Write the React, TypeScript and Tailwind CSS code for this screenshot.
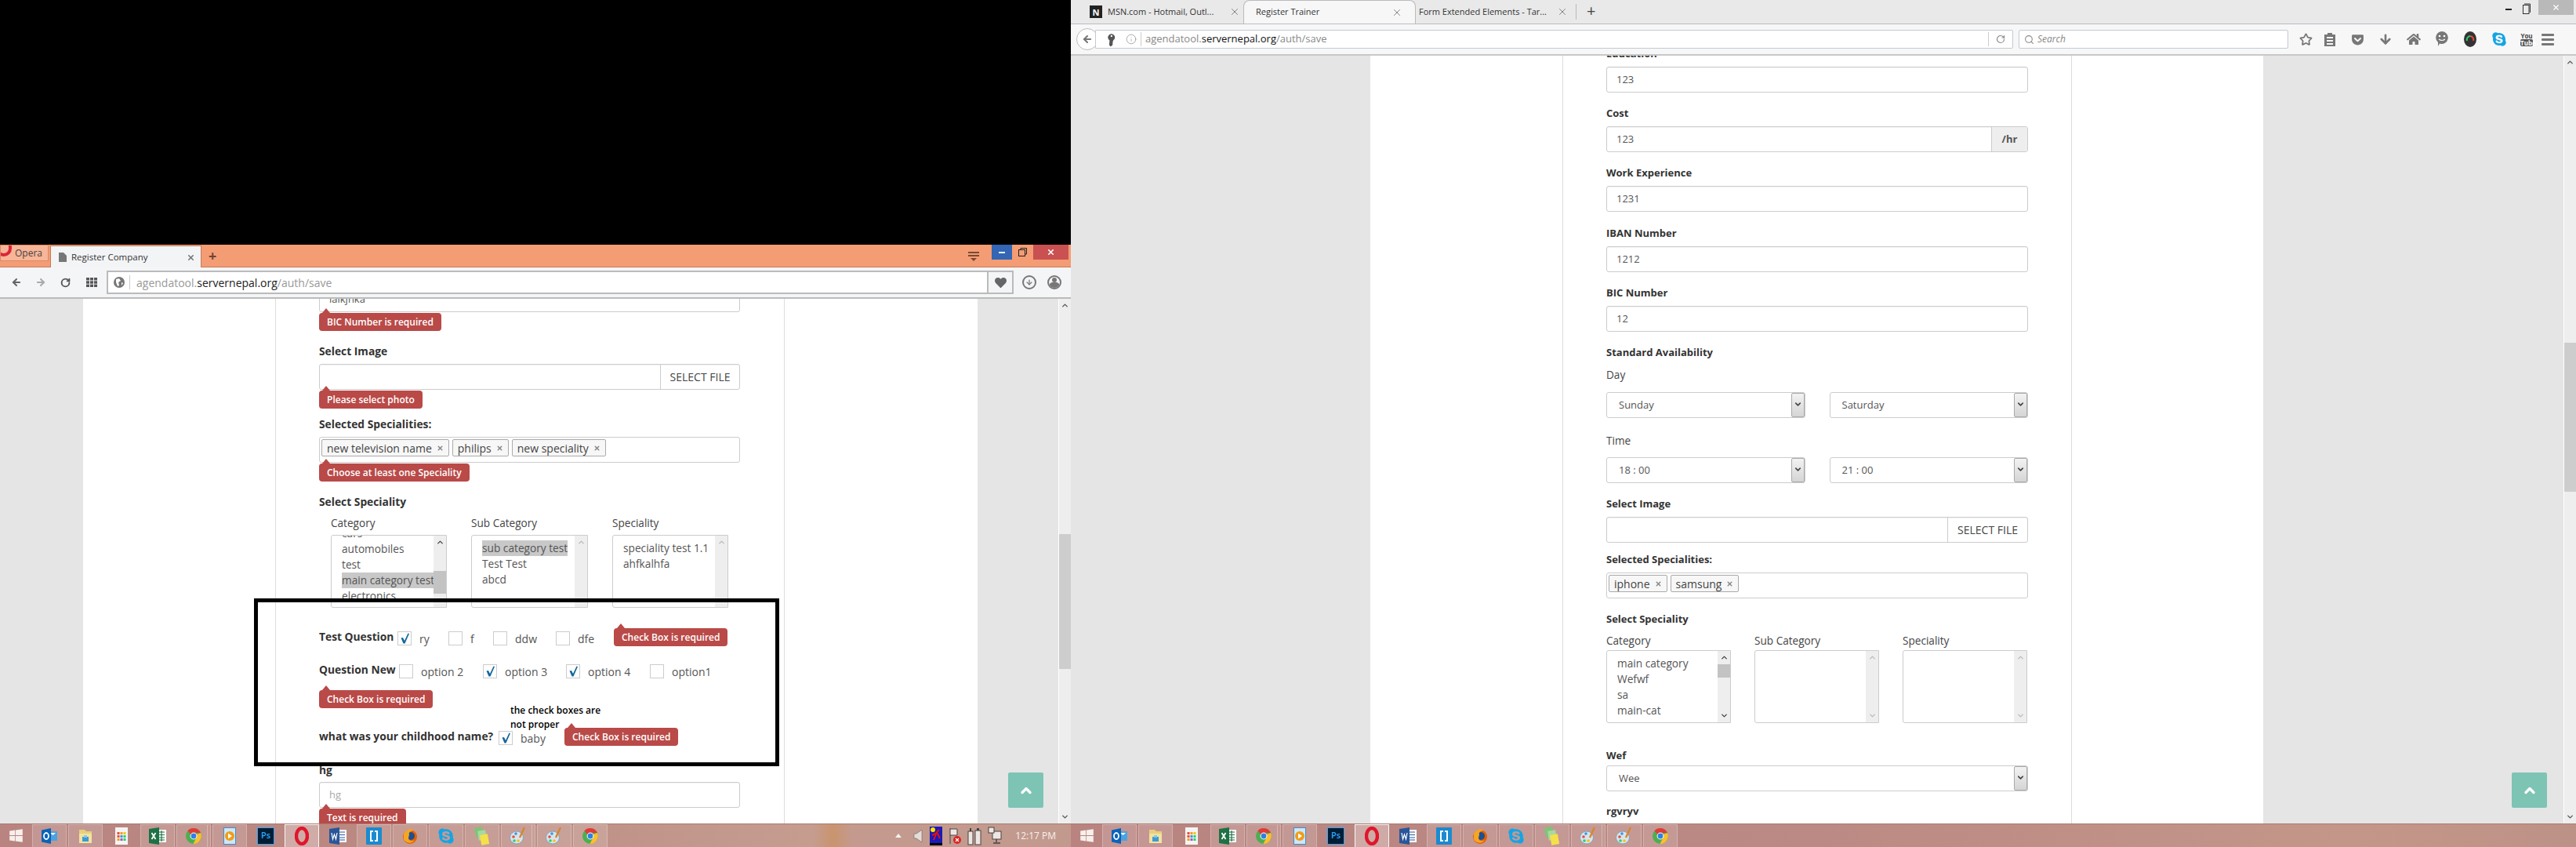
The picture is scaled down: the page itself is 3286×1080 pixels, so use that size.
import type { ReactNode } from 'react';
import { ArrowDown, ArrowLeft, ArrowRight, ChevronDown, ChevronUp, Info, RotateCw, Search, Star, X } from 'lucide-react';
import { FaGetPocket, FaHome, FaSkype, FaKey, FaHeart, FaWindows } from 'react-icons/fa';

/* ---------- small form pieces ---------- */

function Label({ children, className = '', size = 'text-[13px]' }: { children: ReactNode; className?: string; size?: string }) {
  return <div className={`h-[20px] flex items-center font-bold text-[#333] whitespace-nowrap ${size} ${className}`}>{children}</div>;
}

function SubLabel({ children, className = '' }: { children: ReactNode; className?: string }) {
  return <div className={`h-[20px] flex items-center text-[13.6px] text-[#444] whitespace-nowrap ${className}`}>{children}</div>;
}

function TextBox({ value, className = '', muted = false, addon }: { value?: string; className?: string; muted?: boolean; addon?: ReactNode }) {
  return (
    <div className={`h-[33px] flex items-stretch border border-[#ccc] rounded-[3px] bg-white text-[13px] overflow-hidden shadow-[inset_0_1px_1px_rgba(0,0,0,0.05)] ${className}`}>
      <div className={`flex-1 flex items-center pl-[12px] ${muted ? 'text-[#aaa]' : 'text-[#555]'}`}>{value}</div>
      {addon}
    </div>
  );
}

function FileBox({ className = '', btn }: { className?: string; btn: string }) {
  return (
    <TextBox
      className={className}
      addon={<div className={`${btn} flex items-center justify-center border-l border-[#ccc] text-[14px] text-[#444]`}>SELECT FILE</div>}
    />
  );
}

function Badge({ text, className = '' }: { text: string; className?: string }) {
  return (
    <div className={`relative h-[23px] w-fit px-[10px] flex items-center rounded-[4px] bg-[#b94a48] text-[12px] font-semibold text-white whitespace-nowrap ${className}`}>
      <span className="absolute top-[-6px] left-[4px] w-0 h-0 border-x-[5px] border-x-transparent border-b-[6px] border-b-[#b94a48]" />
      {text}
    </div>
  );
}

function Tag({ text }: { text: string }) {
  return (
    <div className="h-[22px] flex items-center gap-[6px] px-[6px] border border-[#aaa] rounded-[2px] bg-[#f7f7f7] text-[14px] text-[#444] whitespace-nowrap">
      {text}
      <X size={9} strokeWidth={4} className="text-[#888]" />
    </div>
  );
}

function TagBox({ tags, className = '' }: { tags: string[]; className?: string }) {
  return (
    <div className={`h-[33px] flex items-start gap-[4px] pt-[2px] pl-[2px] border border-[#ccc] rounded-[3px] bg-white ${className}`}>
      {tags.map((t) => (
        <Tag key={t} text={t} />
      ))}
    </div>
  );
}

function DropBox({ value, className = '' }: { value: string; className?: string }) {
  return (
    <div className={`h-[33px] flex items-stretch border border-[#ccc] rounded-[3px] bg-white text-[13px] text-[#555] ${className}`}>
      <div className="flex-1 flex items-center pl-[15px]">{value}</div>
      <div className="w-[17px] flex items-center justify-center pb-[2px] border border-[#aaa] rounded-[2px] bg-gradient-to-b from-[#f2f2f2] to-[#d5d5d5]">
        <ChevronDown size={11} strokeWidth={3.5} className="text-[#444]" />
      </div>
    </div>
  );
}

function ListBox({
  items,
  selected,
  selClass = '',
  pull = 'pt-[6px]',
  thumb,
  className = '',
}: {
  items: string[];
  selected?: number;
  selClass?: string;
  pull?: string;
  thumb?: string;
  className?: string;
}) {
  const arrow = thumb ? 'text-[#444]' : 'text-[#bbb]';
  return (
    <div className={`h-[93px] flex border border-[#ccc] rounded-l-[3px] bg-white overflow-hidden ${className}`}>
      <div className={`flex-1 min-w-0 text-[13.7px] text-[#555] ${pull}`}>
        {items.map((t, i) => (
          <div key={t} className="h-[20px] flex items-center pl-[13px] whitespace-nowrap overflow-hidden">
            <span className={i === selected ? `bg-[#c8c8c8] ${selClass}` : ''}>{t}</span>
          </div>
        ))}
      </div>
      <div className="w-[16px] shrink-0 flex flex-col bg-[#eeeeee]">
        <div className="h-[17px] flex items-center justify-center">
          <ChevronUp size={11} strokeWidth={3} className={arrow} />
        </div>
        {thumb ? <div className={`bg-[#c3c3c3] ${thumb}`} /> : null}
        <div className="flex-1" />
        <div className="h-[17px] flex items-center justify-center">
          <ChevronDown size={11} strokeWidth={3} className={arrow} />
        </div>
      </div>
    </div>
  );
}

function Check({ on = false }: { on?: boolean }) {
  return (
    <div className="w-[18px] h-[18px] shrink-0 border border-[#ccc] bg-white flex items-center justify-center">
      {on ? (
        <svg width="13" height="14" viewBox="0 0 13 14">
          <path d="M1.5 6.5 L4 6 L6 10 L10.5 0.5 L12 1 L6.5 13.5 L4.5 13.5 Z" fill="#13689b" />
        </svg>
      ) : null}
    </div>
  );
}

function Opt({ text, on, className }: { text: string; on?: boolean; className: string }) {
  return (
    <div className={`flex items-center shrink-0 text-[14px] text-[#555] ${className}`}>
      <Check on={on} />
      <span className="ml-[10px] whitespace-nowrap">{text}</span>
    </div>
  );
}

function UpButton() {
  return (
    <div className="w-[45px] h-[45px] flex items-center justify-center rounded-[2px] bg-[#7dc4b5]">
      <ChevronUp size={20} strokeWidth={4} className="text-white" />
    </div>
  );
}

function PageBar({ thumb }: { thumb: string }) {
  return (
    <div className="w-[16px] shrink-0 flex flex-col border-l border-white bg-[#eeeeee]">
      <div className="h-[17px] flex items-center justify-center">
        <ChevronUp size={11} strokeWidth={3} className="text-[#555]" />
      </div>
      <div className={`bg-[#cdcdcd] ${thumb}`} />
      <div className="flex-1" />
      <div className="h-[17px] flex items-center justify-center">
        <ChevronDown size={11} strokeWidth={3} className="text-[#555]" />
      </div>
    </div>
  );
}

/* ---------- taskbar icons ---------- */

const Outlook = () => (
  <svg width="20" height="20" viewBox="0 0 20 20">
    <rect x="9" y="4" width="11" height="12" fill="#4aa3e0" />
    <path d="M11 6 h7 l-3.5 3 Z" fill="#fff" />
    <path d="M0 2.5 L12 0 V20 L0 17.5 Z" fill="#0a63b8" />
    <ellipse cx="6" cy="10" rx="3" ry="4" fill="none" stroke="#fff" strokeWidth="1.8" />
  </svg>
);
const Folder = () => (
  <svg width="20" height="22" viewBox="0 0 20 22">
    <path d="M2 3 h7 l2 2 h7 v15 H2 Z" fill="#e8d07a" />
    <rect x="2" y="8" width="16" height="12" fill="#f2e3a0" />
    <rect x="6" y="12" width="8" height="6" fill="#3d9bd4" />
    <rect x="8" y="10" width="4" height="3" fill="#8cc5e6" />
  </svg>
);
const Tiles = () => (
  <svg width="16" height="22" viewBox="0 0 16 22">
    <rect width="16" height="22" fill="#f4f4f4" />
    {['#e74c3c', '#f39c12', '#f1c40f', '#e74c3c', '#3498db', '#2ecc71', '#f39c12', '#9b59b6', '#2ecc71'].map((c, i) => (
      <rect key={i} x={2.5 + (i % 3) * 4} y={6 + Math.floor(i / 3) * 4} width="3" height="3" fill={c} />
    ))}
  </svg>
);
const Excel = () => (
  <svg width="22" height="22" viewBox="0 0 22 22">
    <rect x="10" y="3" width="12" height="16" fill="#fff" />
    <path d="M12 6 h8 M12 9.5 h8 M12 13 h8 M12 16 h8 M16 4 v14" stroke="#1e7145" strokeWidth="1.2" />
    <path d="M0 2 L13 0 V22 L0 20 Z" fill="#1e7145" />
    <path d="M3.5 7 l5 8 M8.5 7 l-5 8" stroke="#fff" strokeWidth="1.8" />
  </svg>
);
const Chrome = () => (
  <svg width="20" height="20" viewBox="0 0 20 20">
    <circle cx="10" cy="10" r="10" fill="#4caf50" />
    <path d="M10 0 A10 10 0 0 1 19 6 H10 A4 4 0 0 0 6.5 8 L2.5 3.3 A10 10 0 0 1 10 0 Z" fill="#e53935" />
    <path d="M19 6 A10 10 0 0 1 9.5 20 L13.5 12 A4 4 0 0 0 13.5 8 Z" fill="#fbc02d" />
    <circle cx="10" cy="10" r="4.4" fill="#fff" />
    <circle cx="10" cy="10" r="3.4" fill="#2f7fe6" />
  </svg>
);
const Media = () => (
  <svg width="16" height="22" viewBox="0 0 16 22">
    <rect x="0.5" y="0.5" width="15" height="21" fill="#cfe6f6" stroke="#3b8fd0" />
    <circle cx="8" cy="11" r="6" fill="#f39c12" />
    <path d="M6 7.5 L11 11 L6 14.5 Z" fill="#fff" />
  </svg>
);
const Ps = () => (
  <div className="w-[22px] h-[22px] flex items-center justify-center border border-[#31a8ff] bg-[#001d34] text-[11px] font-semibold text-[#31a8ff]">Ps</div>
);
const Opera = () => (
  <svg width="18" height="24" viewBox="0 0 18 24">
    <ellipse cx="9" cy="12" rx="7" ry="10" fill="none" stroke="#e0162b" strokeWidth="4.4" />
  </svg>
);
const Word = () => (
  <svg width="22" height="22" viewBox="0 0 22 22">
    <rect x="10" y="3" width="12" height="16" fill="#fff" />
    <path d="M13 6 h7 M13 9.5 h7 M13 13 h7 M13 16 h7" stroke="#2a5699" strokeWidth="1.2" />
    <path d="M0 2 L13 0 V22 L0 20 Z" fill="#2a5699" />
    <path d="M3 7 l1.5 8 l2 -6 l2 6 l1.5 -8" fill="none" stroke="#fff" strokeWidth="1.2" />
  </svg>
);
const Brackets = () => (
  <svg width="20" height="22" viewBox="0 0 20 22">
    <rect width="20" height="22" rx="1" fill="#1a8bd0" />
    <path d="M9 5 H6 V17 H9 M11 5 H14 V17 H11" fill="none" stroke="#fff" strokeWidth="2" />
  </svg>
);
const Firefox = () => (
  <svg width="20" height="22" viewBox="0 0 20 22">
    <circle cx="10" cy="12" r="9" fill="#e66000" />
    <circle cx="11" cy="11" r="5" fill="#1d4f91" />
    <path d="M2 8 C5 2 12 1 15 4 C11 4 8 6 9 10 C6 16 11 19 16 16 C13 21 5 21 2 15 Z" fill="#f5a623" />
  </svg>
);
const Skype = () => <FaSkype size={22} className="text-[#12a5e6]" />;
const Files = () => (
  <svg width="20" height="24" viewBox="0 0 20 24">
    <rect x="1" y="1" width="10" height="12" fill="#7cc576" transform="rotate(-14 6 7)" />
    <rect x="5" y="5" width="10" height="12" fill="#a8d8a0" transform="rotate(-8 10 11)" />
    <rect x="8" y="10" width="10" height="13" fill="#f5e04a" transform="rotate(-10 13 16)" />
  </svg>
);
const Paint = () => (
  <svg width="22" height="22" viewBox="0 0 22 22">
    <ellipse cx="9" cy="13" rx="8.5" ry="8" fill="#d8e4ee" stroke="#8aa0b4" />
    <circle cx="5" cy="12" r="1.8" fill="#e74c3c" />
    <circle cx="8" cy="8" r="1.8" fill="#3498db" />
    <circle cx="6" cy="17" r="1.8" fill="#2ecc71" />
    <circle cx="11" cy="17" r="1.8" fill="#f1c40f" />
    <path d="M19 0 L13 13" stroke="#d8862c" strokeWidth="2.4" />
  </svg>
);

function Slot({ children, plain = false, active = false, stack = false }: { children: ReactNode; plain?: boolean; active?: boolean; stack?: boolean }) {
  const look = active
    ? 'bg-white/30 border-white/90'
    : plain
      ? 'border-transparent'
      : 'bg-white/15 border-white/25';
  return (
    <div className={`relative w-[44px] h-[30px] shrink-0 flex items-center justify-center border ${look}`}>
      {children}
      {stack ? <span className="absolute right-[3px] top-0 bottom-0 w-[1px] bg-white/30" /> : null}
    </div>
  );
}

function TaskApps() {
  return (
    <div className="flex items-center gap-[2px]">
      <Slot><Outlook /></Slot>
      <Slot><Folder /></Slot>
      <Slot plain><Tiles /></Slot>
      <Slot><Excel /></Slot>
      <Slot stack><Chrome /></Slot>
      <Slot><Media /></Slot>
      <Slot plain><Ps /></Slot>
      <Slot active><Opera /></Slot>
      <Slot plain><Word /></Slot>
      <Slot><Brackets /></Slot>
      <Slot><Firefox /></Slot>
      <Slot><Skype /></Slot>
      <Slot><Files /></Slot>
      <Slot stack><Paint /></Slot>
      <Slot><Paint /></Slot>
      <Slot><Chrome /></Slot>
    </div>
  );
}

function WinButton({ className }: { className: string }) {
  return (
    <div className={`shrink-0 flex items-center justify-center ${className}`}>
      <FaWindows size={19} className="text-[#f7efec]" />
    </div>
  );
}

function Tray() {
  return (
    <div className="flex items-center pr-[19px] text-white">
      <span className="w-0 h-0 border-x-[4px] border-x-transparent border-b-[5px] border-b-[#f4f4f4] mr-[15px]" />
      <svg width="12" height="20" viewBox="0 0 12 20" className="mr-[9px]">
        <path d="M1 7 H4 L11 2 V18 L4 13 H1 Z" fill="#e7dcd8" stroke="#666" strokeWidth="0.6" />
      </svg>
      <div className="w-[16px] h-[24px] mr-[8px] bg-[#1a1ab8] border-b-[3px] border-black flex items-center justify-center">
        <svg width="14" height="18" viewBox="0 0 14 18">
          <circle cx="3" cy="3" r="3" fill="#ffe600" />
          <path d="M4 16 L8 6 L11 3 M8 6 L12 14 M2 10 L8 7" stroke="#e01010" strokeWidth="2" fill="none" />
        </svg>
      </div>
      <svg width="16" height="24" viewBox="0 0 16 24" className="mr-[8px]">
        <path d="M2 2 V22 M2 3 H11 V11 H2" fill="#efe6e3" stroke="#444" strokeWidth="1" />
        <circle cx="11" cy="17" r="5" fill="#d22" />
        <path d="M9 15 l4 4 M13 15 l-4 4" stroke="#fff" strokeWidth="1.2" />
      </svg>
      <svg width="18" height="24" viewBox="0 0 18 24" className="mr-[8px]">
        <rect x="1" y="6" width="6" height="17" fill="#efe6e3" stroke="#444" />
        <rect x="10" y="5" width="7" height="18" fill="#efe6e3" stroke="#444" />
        <rect x="3" y="2" width="2" height="4" fill="#444" />
        <rect x="12" y="2" width="3" height="3" fill="#444" />
      </svg>
      <svg width="18" height="24" viewBox="0 0 18 24" className="mr-[17px]">
        <rect x="6" y="6" width="11" height="10" fill="#efe6e3" stroke="#444" />
        <rect x="1" y="1" width="7" height="7" fill="#efe6e3" stroke="#444" />
        <path d="M11 16 V20 M7 21 H16" stroke="#444" strokeWidth="1.4" />
      </svg>
      <span className="text-[12px] text-[#f6f0ee] whitespace-nowrap">12:17 PM</span>
    </div>
  );
}

/* ---------- left window (Opera) ---------- */

function OperaChrome() {
  return (
    <>
      <div className="h-[29px] flex items-start bg-[#f49c74] border-b border-[#c97b58]">
        <div className="relative w-[62px] h-[21px] shrink-0 flex items-center justify-end pr-[7px] bg-[#f8b597] border border-[#d98a66] text-[12px] text-[#444] overflow-hidden">
          <span className="absolute left-[-6px] top-[-8px] w-[20px] h-[22px] rounded-full border-[4px] border-[#d9263b]" />
          Opera
        </div>
        <div className="ml-[2px] w-[193px] h-[29px] mt-[1px] shrink-0 flex items-center pl-[10px] pr-[7px] bg-[#f3f4f6] border-x border-t border-[#c97b58] text-[11.5px] text-[#333]">
          <svg width="10" height="12" viewBox="0 0 10 12" className="mr-[6px] shrink-0">
            <path d="M0 0 H6 L10 4 V12 H0 Z" fill="#777" />
          </svg>
          <span className="flex-1 whitespace-nowrap">Register Company</span>
          <X size={11} strokeWidth={3.5} className="text-[#777]" />
        </div>
        <span className="ml-[9px] mt-[4px] text-[18px] leading-[20px] font-bold text-[#6d4632]">+</span>
        <div className="flex-1" />
        <svg width="14" height="13" viewBox="0 0 14 13" className="mt-[9px] mr-[16px]">
          <path d="M0 1 H14 M0 5 H14" stroke="#7a4a33" strokeWidth="1.8" />
          <path d="M3 8 H11 L7 12 Z" fill="#7a4a33" />
        </svg>
        <div className="w-[26px] h-[19px] flex items-center justify-center bg-[#3366b5]">
          <span className="w-[8px] h-[2px] bg-white" />
        </div>
        <div className="w-[27px] h-[19px] flex items-center justify-center">
          <svg width="11" height="11" viewBox="0 0 11 11" fill="none" stroke="#222">
            <rect x="0.5" y="2.5" width="8" height="8" />
            <path d="M3 2 V0.5 H10.5 V8 H9" />
          </svg>
        </div>
        <div className="w-[45px] h-[19px] flex items-center justify-center bg-[#c95151]">
          <X size={11} strokeWidth={3.5} className="text-white" />
        </div>
        <div className="w-[3px]" />
      </div>
      <div className="h-[40px] flex items-center bg-[#f4f5f7] border-b-2 border-[#bbb]">
        <ArrowLeft size={14} strokeWidth={3.5} className="ml-[14px] text-[#666]" />
        <ArrowRight size={14} strokeWidth={3.5} className="ml-[17px] text-[#aaa]" />
        <RotateCw size={13} strokeWidth={3.5} className="ml-[18px] text-[#555]" />
        <svg width="14" height="12" viewBox="0 0 14 12" className="ml-[20px] text-[#555]">
          {[0, 1, 2].map((r) =>
            [0, 1, 2].map((c) => <rect key={`${r}${c}`} x={c * 5} y={r * 4.3} width="4" height="3.4" fill="currentColor" />),
          )}
        </svg>
        <div className="ml-[12px] w-[1157px] h-[30px] flex items-stretch bg-white border-2 border-[#bbb] border-r-0">
          <div className="w-[27px] flex items-center justify-center">
            <svg width="14" height="14" viewBox="0 0 14 14">
              <circle cx="7" cy="7" r="7" fill="#777" />
              <path d="M3 3 L7 2 L9 5 L6 7 L7 11 L5 12 L3 7 Z M10 7 L12 8 L10 11 Z" fill="#fff" />
            </svg>
          </div>
          <div className="flex-1 flex items-center text-[14px] text-[#999]">
            <span className="h-[18px] border-l border-[#ccc] mr-[8px]" />
            <span className="whitespace-nowrap">agendatool.<span className="text-[#222]">servernepal.org</span>/auth/save</span>
          </div>
          <div className="w-[34px] flex items-center justify-center bg-[#f4f5f7] border-x-2 border-[#bbb]">
            <FaHeart size={15} className="text-[#666]" />
          </div>
        </div>
        <div className="ml-[11px] w-[18px] h-[18px] rounded-full border-2 border-[#777] flex items-center justify-center">
          <ArrowDown size={10} strokeWidth={3} className="text-[#777]" />
        </div>
        <div className="ml-[14px] w-[18px] h-[18px] rounded-full border-2 border-[#777] overflow-hidden flex flex-col items-center">
          <span className="mt-[1px] w-[6px] h-[6px] rounded-full bg-[#777]" />
          <span className="w-[14px] h-[8px] rounded-t-[5px] bg-[#777]" />
        </div>
      </div>
    </>
  );
}

function OperaForm() {
  const big = 'text-[13.8px]';
  return (
    <div className="ml-[245px] w-[650px] shrink-0 h-full overflow-hidden bg-white border-x border-[#ddd] pl-[55px] pr-[56px]">
      <TextBox value="lalkjhka" className="mt-[-16px]" />
      <Badge text="BIC Number is required" className="mt-[1px]" />
      <Label size={big} className="mt-[16px]">Select Image</Label>
      <FileBox className="mt-[6px]" btn="w-[101px]" />
      <Badge text="Please select photo" className="mt-[1px]" />
      <Label size={big} className="mt-[10px]">Selected Specialities:</Label>
      <TagBox className="mt-[6px]" tags={['new television name', 'philips', 'new speciality']} />
      <Badge text="Choose at least one Speciality" className="mt-[1px]" />
      <Label size={big} className="mt-[16px]">Select Speciality</Label>
      <div className="mt-[7px] ml-[15px] flex">
        <SubLabel className="w-[179px]">Category</SubLabel>
        <SubLabel className="w-[180px]">Sub Category</SubLabel>
        <SubLabel>Speciality</SubLabel>
      </div>
      <div className="mt-[5px] ml-[15px] flex gap-[31px]">
        <ListBox
          className="w-[148px]"
          pull="mt-[-13px]"
          items={['cars', 'automobiles', 'test', 'main category test', 'electronics', 'phones']}
          selected={3}
          thumb="mt-[28px] h-[30px]"
        />
        <ListBox className="w-[149px]" items={['sub category test', 'Test Test', 'abcd']} selected={0} />
        <ListBox className="w-[148px]" items={['speciality test 1.1', 'ahfkalhfa']} />
      </div>
      <div className="mt-[24px] h-[30px] flex items-center">
        <Label size={big} className="w-[100px] shrink-0 mb-[4px]">Test Question</Label>
        <Opt text="ry" on className="w-[65px]" />
        <Opt text="f" className="w-[57px]" />
        <Opt text="ddw" className="w-[80px]" />
        <Opt text="dfe" className="w-[74px]" />
        <Badge text="Check Box is required" className="mb-[3px]" />
      </div>
      <div className="mt-[12px] h-[30px] flex items-center">
        <Label size={big} className="w-[102px] shrink-0 mb-[4px]">Question New</Label>
        <Opt text="option 2" className="w-[107px]" />
        <Opt text="option 3" on className="w-[106px]" />
        <Opt text="option 4" on className="w-[107px]" />
        <Opt text="option1" className="w-[80px]" />
      </div>
      <Badge text="Check Box is required" className="mt-[9px]" />
      <div className="mt-[23px] h-[30px] flex items-center">
        <Label size={big} className="w-[229px] shrink-0 mb-[4px]">what was your childhood name?</Label>
        <Opt text="baby" on className="w-[84px]" />
        <Badge text="Check Box is required" className="mb-[3px]" />
      </div>
      <Label size={big} className="mt-[16px]">hg</Label>
      <TextBox value="hg" muted className="mt-[5px]" />
      <Badge text="Text is required" className="mt-[1px]" />
    </div>
  );
}

function OperaWindow() {
  return (
    <div className="w-[1366px] h-[1080px] shrink-0 flex flex-col">
      <div className="h-[312px] bg-black" />
      <OperaChrome />
      <div className="relative h-[669px] flex bg-[#e5e5e5] overflow-hidden">
        <div className="ml-[106px] w-[1141px] shrink-0 h-full bg-white">
          <OperaForm />
        </div>
        <div className="flex-1 flex items-end justify-end pr-[19px] pb-[20px]">
          <UpButton />
        </div>
        <PageBar thumb="mt-[283px] h-[172px]" />
        {/* the annotation someone drew over the screenshot */}
        <div className="absolute left-[324px] top-[382px] w-[670px] h-[214px] border-[5px] border-black">
          <div className="absolute left-[322px] top-[129px] text-[12px] leading-[18px] font-semibold text-black whitespace-nowrap">
            the check boxes are
            <br />
            not proper
          </div>
        </div>
      </div>
      <div className="h-[30px] flex bg-[linear-gradient(to_right,#b98480_0%,#bb8a82_40%,#c49a8e_70%,#c59c8e_76%,#c9946e_77.8%,#c49a8e_79.5%,#c29a8d_100%)] border-t border-[#a87c72]">
        <WinButton className="w-[41px]" />
        <TaskApps />
        <div className="flex-1" />
        <Tray />
      </div>
    </div>
  );
}

/* ---------- right window (Firefox) ---------- */

function FirefoxTab({ title, active = false, w, icon }: { title: string; active?: boolean; w: string; icon?: boolean }) {
  return (
    <div className={`${w} h-[30px] shrink-0 flex items-center text-[11px] text-[#333] ${active ? 'pl-[15px] pr-[16px] bg-[#f7f7f7] border-x border-t border-[#bbb] rounded-t-[8px]' : ''}`}>
      {icon ? (
        <div className="w-[16px] h-[16px] mr-[7px] shrink-0 flex items-center justify-center bg-[#222] text-[11px] font-bold leading-none text-white">N</div>
      ) : null}
      <span className="flex-1 whitespace-nowrap overflow-hidden">{title}</span>
      <X size={14} strokeWidth={1.2} className="text-[#555] shrink-0" />
    </div>
  );
}

function FirefoxChrome() {
  return (
    <>
      <div className="h-[30px] flex items-start bg-[#e9e9e9]">
        <div className="w-[24px]" />
        <div className="w-[196px] pr-[4px] shrink-0"><FirefoxTab w="w-[192px]" icon title="MSN.com - Hotmail, Outl..." /></div>
        <FirefoxTab w="w-[220px]" active title="Register Trainer" />
        <div className="w-[4px]" />
        <FirefoxTab w="w-[190px]" title="Form Extended Elements - Tar..." />
        <div className="ml-[10px] mt-[5px] h-[20px] border-l border-[#bbb]" />
        <span className="ml-[13px] mt-[3px] text-[20px] leading-[22px] text-[#444]">+</span>
        <div className="flex-1" />
        <div className="w-[8px] h-[2px] mt-[11px] mr-[14px] bg-[#222]" />
        <svg width="10" height="14" viewBox="0 0 10 14" fill="none" stroke="#333" className="mt-[4px] mr-[10px]">
          <rect x="0.5" y="2.5" width="7.5" height="11" />
          <path d="M2 1 H9.5 V12" />
        </svg>
        <div className="w-[45px] h-[19px] flex items-center justify-center bg-[#b9b9b9]">
          <X size={11} strokeWidth={2.5} className="text-white" />
        </div>
        <div className="w-[3px]" />
      </div>
      <div className="h-[41px] flex items-center bg-[#f7f7f7] border-t border-[#b8bcc4] border-b-2 border-b-[#c8c8c8]">
        <div className="ml-[7px] w-[28px] h-[28px] shrink-0 rounded-full border border-[#bbb] bg-white flex items-center justify-center">
          <ArrowLeft size={14} strokeWidth={3.5} className="text-[#777]" />
        </div>
        <div className="w-[1171px] h-[24px] ml-[-4px] shrink-0 flex items-center bg-white border border-[#c3cad3] rounded-r-[2px] text-[13px] text-[#888]">
          <FaKey size={13} className="ml-[13px] text-[#555] rotate-[-40deg]" />
          <Info size={14} strokeWidth={1} className="ml-[12px] text-[#777]" />
          <span className="ml-[5px] h-[18px] border-l border-[#ccc]" />
          <span className="ml-[5px] whitespace-nowrap">agendatool.<span className="text-[#111]">servernepal.org</span>/auth/save</span>
          <div className="flex-1" />
          <span className="h-[18px] border-l border-[#ccc]" />
          <RotateCw size={12} strokeWidth={2.4} className="mx-[9px] text-[#888]" />
        </div>
        <div className="ml-[7px] w-[344px] h-[24px] shrink-0 flex items-center gap-[4px] pl-[6px] bg-white border border-[#c3cad3] rounded-[2px] text-[12px] italic text-[#888]">
          <Search size={13} strokeWidth={2} className="text-[#888]" />
          Search
        </div>
        <Star size={17} strokeWidth={2.5} className="ml-[14px] text-[#777]" />
        <svg width="14" height="18" viewBox="0 0 14 18" className="ml-[15px] text-[#777]">
          <path d="M0 3 H4 V1 H10 V3 H14 V18 H0 Z M3 6 V8 H11 V6 Z M3 10 V12 H11 V10 Z M3 14 V16 H11 V14 Z" fill="currentColor" fillRule="evenodd" />
        </svg>
        <FaGetPocket size={17} className="ml-[20px] text-[#777]" />
        <ArrowDown size={18} strokeWidth={3.5} className="ml-[18px] text-[#777]" />
        <FaHome size={18} className="ml-[18px] text-[#777]" />
        <svg width="18" height="20" viewBox="0 0 18 20" className="ml-[18px]">
          <path d="M9 0 A8 8 0 1 1 6 15.5 L4 19 V14 A8 8 0 0 1 9 0 Z" fill="#777" />
          <circle cx="6" cy="6" r="1.3" fill="#fff" />
          <circle cx="12" cy="6" r="1.3" fill="#fff" />
          <path d="M5 10 Q9 13 13 10" stroke="#fff" strokeWidth="1.2" fill="none" />
        </svg>
        <svg width="18" height="20" viewBox="0 0 18 20" className="ml-[18px]">
          <ellipse cx="9" cy="10" rx="8" ry="10" fill="#333" />
          <path d="M5 12 A4.5 4.5 0 0 1 9 6" stroke="#2ecc71" strokeWidth="2" fill="none" />
          <path d="M9 6 A4.5 4.5 0 0 1 13 12" stroke="#e74c3c" strokeWidth="2" fill="none" />
        </svg>
        <FaSkype size={20} className="ml-[18px] text-[#12a5e6]" />
        <div className="ml-[17px] w-[16px] shrink-0 flex flex-col items-center text-[8px] leading-[9px] font-bold text-[#444]">
          <span>You</span>
          <span className="w-full text-center rounded-[2px] bg-[#555] text-white">Tube</span>
        </div>
        <div className="ml-[11px] w-[16px] shrink-0 flex flex-col gap-[3px]">
          <span className="h-[3px] rounded-[1px] bg-[#777]" />
          <span className="h-[3px] rounded-[1px] bg-[#777]" />
          <span className="h-[3px] rounded-[1px] bg-[#777]" />
        </div>
      </div>
    </>
  );
}

function FirefoxForm() {
  return (
    <div className="ml-[245px] w-[650px] shrink-0 h-full overflow-hidden bg-white border-x border-[#ddd] pl-[55px] pr-[55px]">
      <Label className="mt-[-12px]">Education</Label>
      <TextBox value="123" className="mt-[6px]" />
      <Label className="mt-[17px]">Cost</Label>
      <TextBox
        value="123"
        className="mt-[6px]"
        addon={<div className="w-[46px] flex items-center justify-center bg-[#eee] border-l border-[#ccc] text-[13px] font-bold text-[#555]">/hr</div>}
      />
      <Label className="mt-[17px]">Work Experience</Label>
      <TextBox value="1231" className="mt-[6px]" />
      <Label className="mt-[18px]">IBAN Number</Label>
      <TextBox value="1212" className="mt-[6px]" />
      <Label className="mt-[17px]">BIC Number</Label>
      <TextBox value="12" className="mt-[6px]" />
      <Label className="mt-[17px]">Standard Availability</Label>
      <SubLabel className="mt-[8px]">Day</SubLabel>
      <div className="mt-[12px] grid grid-cols-2 gap-[31px]">
        <DropBox value="Sunday" />
        <DropBox value="Saturday" />
      </div>
      <SubLabel className="mt-[19px]">Time</SubLabel>
      <div className="mt-[11px] grid grid-cols-2 gap-[31px]">
        <DropBox value="18 : 00" />
        <DropBox value="21 : 00" />
      </div>
      <Label className="mt-[17px]">Select Image</Label>
      <FileBox className="mt-[6px]" btn="w-[102px]" />
      <Label className="mt-[12px]">Selected Specialities:</Label>
      <TagBox className="mt-[6px]" tags={['iphone', 'samsung']} />
      <Label className="mt-[17px]">Select Speciality</Label>
      <div className="mt-[7px] flex">
        <SubLabel className="w-[189px]">Category</SubLabel>
        <SubLabel className="w-[189px]">Sub Category</SubLabel>
        <SubLabel>Speciality</SubLabel>
      </div>
      <div className="mt-[2px] flex gap-[30px]">
        <ListBox
          className="w-[159px]"
          items={['main category', 'Wefwf', 'sa', 'main-cat', 'cars']}
          thumb="mt-[0px] h-[17px]"
        />
        <ListBox className="w-[159px]" items={[]} />
        <ListBox className="w-[159px]" items={[]} />
      </div>
      <Label className="mt-[32px]">Wef</Label>
      <DropBox value="Wee" className="mt-[2px]" />
      <Label className="mt-[16px]">rgvryv</Label>
    </div>
  );
}

function FirefoxWindow() {
  return (
    <div className="w-[1920px] h-[1080px] shrink-0 flex flex-col">
      <FirefoxChrome />
      <div className="h-[979px] flex bg-[#e5e5e5] overflow-hidden">
        <div className="ml-[382px] w-[1139px] shrink-0 h-full bg-white">
          <FirefoxForm />
        </div>
        <div className="flex-1 flex items-end justify-end pr-[21px] pb-[20px]">
          <UpButton />
        </div>
        <PageBar thumb="mt-[349px] h-[190px]" />
      </div>
      <div className="h-[30px] flex bg-[linear-gradient(to_right,#b98480_0%,#bb8a84_50%,#c49689_85%,#bd9286_100%)] border-t border-[#a87c72]">
        <WinButton className="w-[40px]" />
        <TaskApps />
      </div>
    </div>
  );
}

export default function App() {
  return (
    <div className="w-[3286px] h-[1080px] flex overflow-hidden bg-black font-['Open_Sans',sans-serif]">
      <OperaWindow />
      <FirefoxWindow />
    </div>
  );
}
